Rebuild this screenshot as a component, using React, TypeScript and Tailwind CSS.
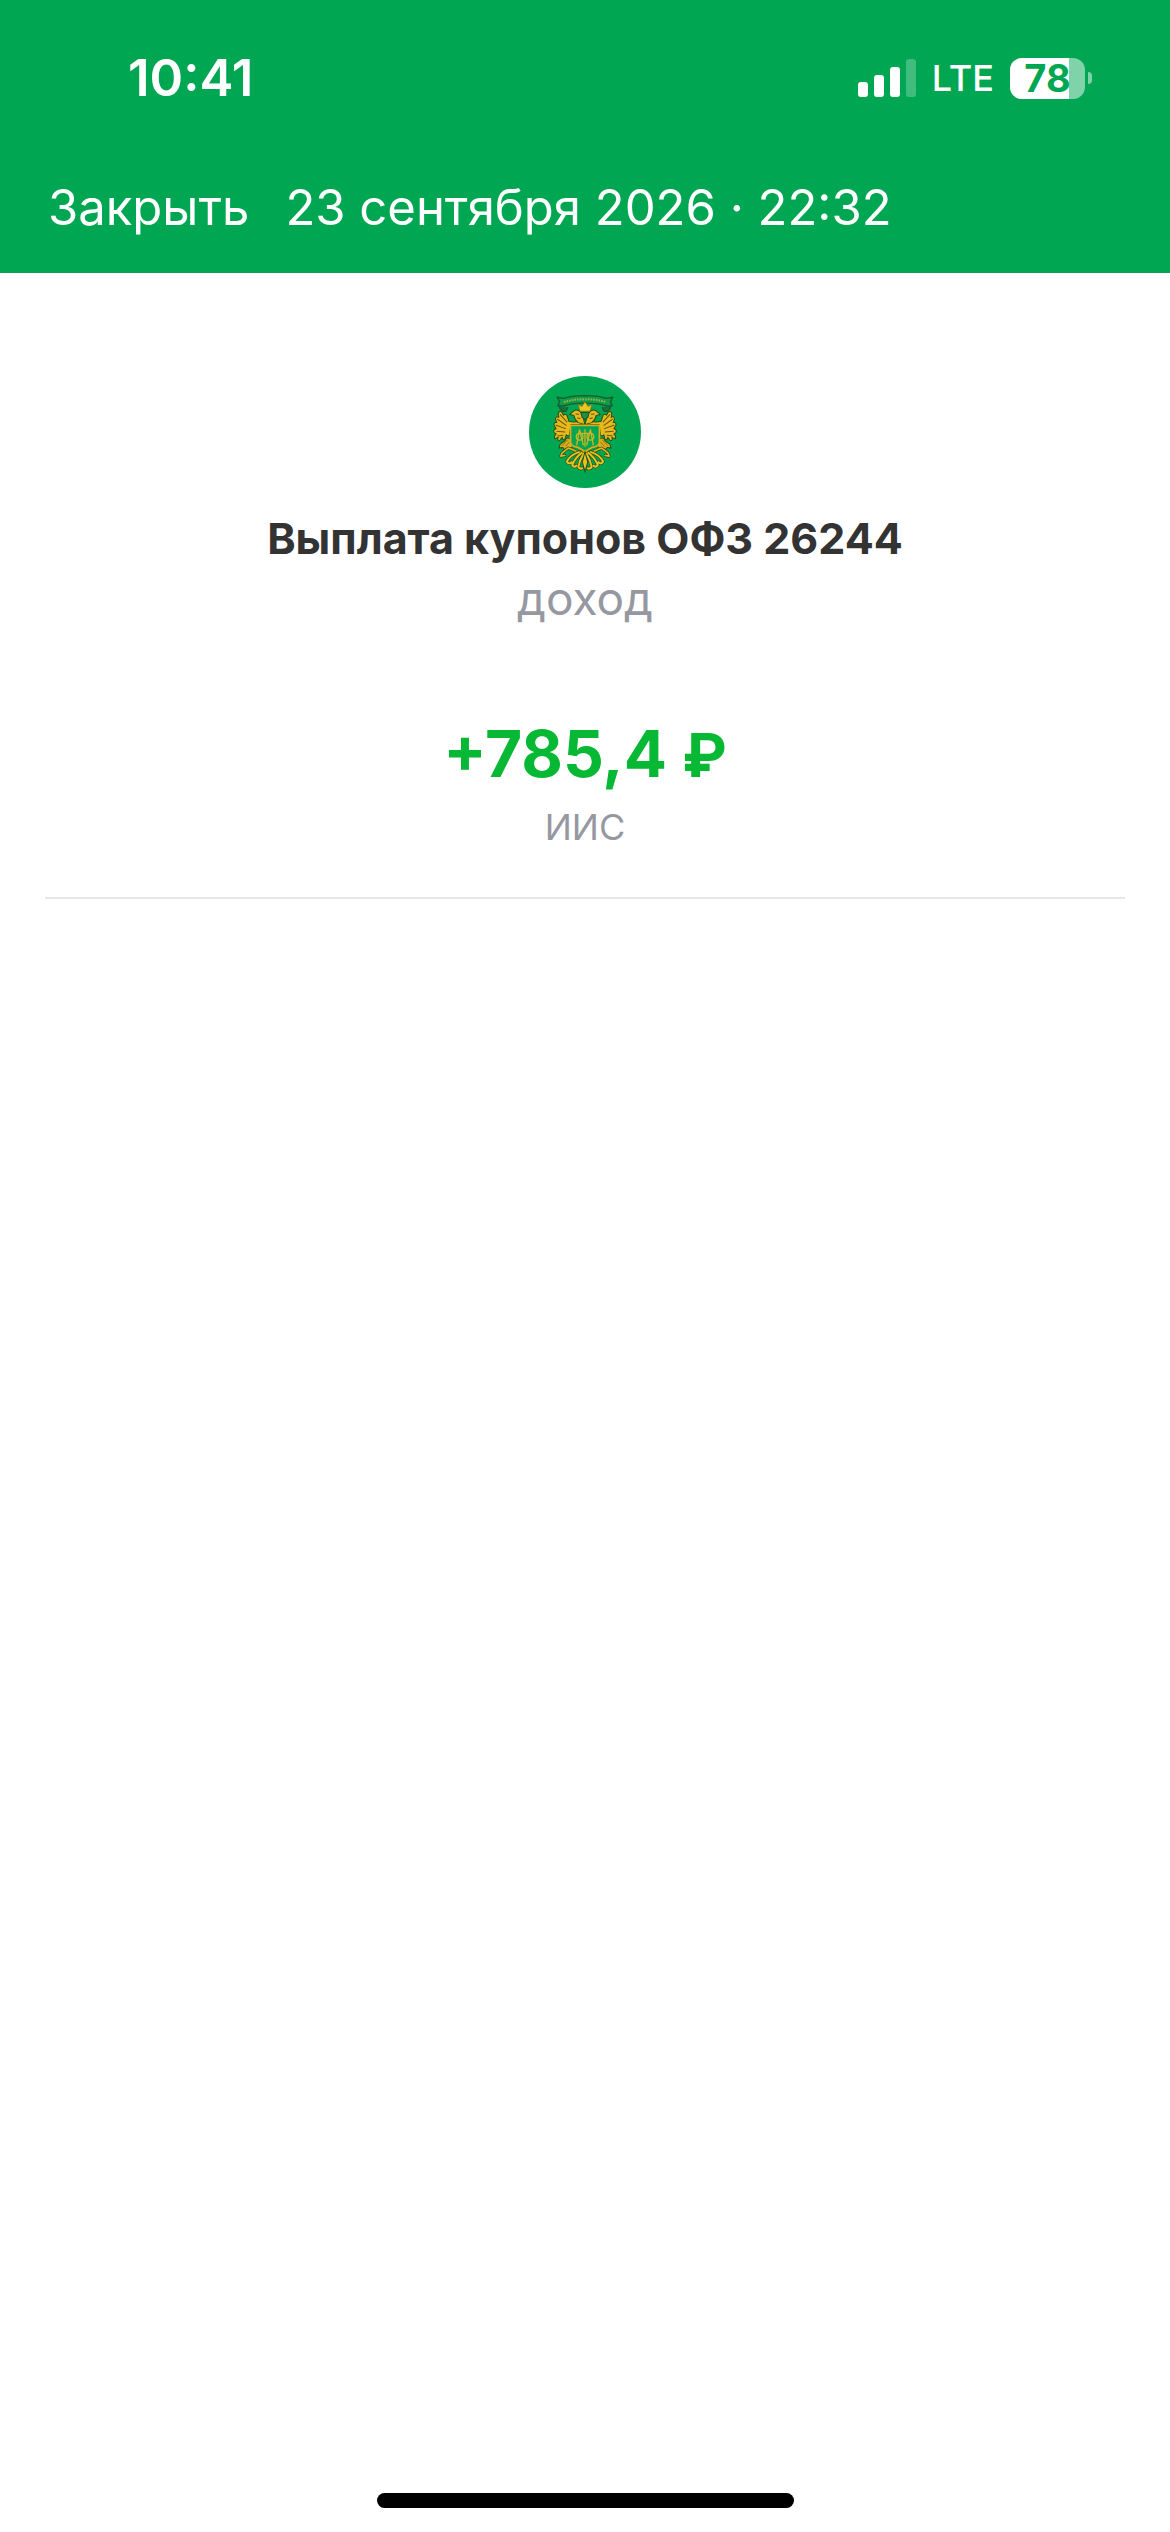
const operation = {
  date: "23 сентября 2026 · 22:32",
  title: "Выплата купонов ОФЗ 26244",
  kind: "доход",
  amount: "+785,4",
  currency: "₽",
  account: "ИИС",
};

const BATTERY_LEVEL = 78;

function SignalIcon() {
  return (
    <svg viewBox="0 0 58 38" className="h-[38px] w-[58px]" fill="#fff" aria-hidden="true">
      <rect x="0" y="23" width="10" height="15" rx="3" />
      <rect x="16" y="16" width="10" height="22" rx="3" />
      <rect x="32" y="8" width="10" height="30" rx="3" />
      <rect x="48" y="0" width="10" height="38" rx="3" opacity="0.25" />
    </svg>
  );
}

function Battery() {
  return (
    <div className="flex items-center gap-[3px]">
      <div className="relative h-[41px] w-[75px] rounded-xl bg-white/50">
        <div className="h-full rounded-l-xl bg-white" style={{ width: `${BATTERY_LEVEL}%` }} />
        <span className="absolute inset-0 flex items-center justify-center text-[38px] leading-[41px] font-bold text-[#00a651]">
          {BATTERY_LEVEL}
        </span>
      </div>
      <div className="h-3 w-1 rounded-r-full bg-white/50" />
    </div>
  );
}

// Right half of the eagle, mirrored for the left side.
function EagleHalf() {
  return (
    <g strokeLinejoin="round" strokeLinecap="round">
      <path
        d="M0 178 L14 168 Q34 172 48 168 L54 150 Q60 144 64 150 L70 140 Q78 136 80 146 L78 156 Q88 152 88 162 L84 172 Q94 170 92 180 L86 190 Q96 192 92 202 L86 206 Q94 212 90 220 L80 216 Q84 226 76 226 L68 216 Q66 226 60 222 L56 208 Q50 216 46 208 L42 178Z"
        fill="#e8b91b"
        stroke="#24501b"
        strokeWidth="3"
      />
      <path
        d="M54 170 L74 148 M56 180 L82 162 M58 190 L86 180 M60 200 L84 198 M66 210 L82 212"
        fill="none"
        stroke="#665414"
        strokeWidth="3"
      />
      <path d="M2 172 Q5 150 14 140 Q24 130 34 138 L46 148 L33 151 Q31 164 20 172 L0 178Z" fill="#e8b91b" stroke="#24501b" strokeWidth="3" />
      <path d="M19 147 L27 146 M15 160 L22 158" stroke="#604f13" strokeWidth="3" />
      <path d="M42 222 Q54 212 60 226 L74 236 L78 248 L66 246 L62 252 L52 248 L44 254 L38 244Z" fill="#dcae1c" stroke="#24501b" strokeWidth="3" />
      <path d="M46 230 L58 242 M52 224 L68 240" stroke="#604f13" strokeWidth="2" />
      <path d="M4 258 Q22 262 38 252 L50 248 L68 262 L72 272 L60 270" fill="none" stroke="#24501b" strokeWidth="9" />
      <path d="M4 258 Q22 262 38 252 L50 248 L68 262 L72 272 L60 270" fill="none" stroke="#e0b51c" strokeWidth="5" />
      <path
        d="M4 264 Q16 284 20 304 Q14 312 8 308 M10 262 Q30 278 38 298 Q32 308 26 300 M18 260 Q44 268 54 288 Q48 298 40 290"
        fill="none"
        stroke="#24501b"
        strokeWidth="10"
      />
      <path
        d="M4 264 Q16 284 20 304 Q14 312 8 308 M10 262 Q30 278 38 298 Q32 308 26 300 M18 260 Q44 268 54 288 Q48 298 40 290"
        fill="none"
        stroke="#efc11d"
        strokeWidth="6"
      />
    </g>
  );
}

function Emblem() {
  return (
    <svg viewBox="28 33 334 334" className="size-28" role="img" aria-label="Эмблема">
      <circle cx="195" cy="200" r="167" fill="#00a651" />
      <path d="M118 122 Q122 142 138 138 L144 126 M272 122 Q268 142 252 138 L246 126" fill="#16723a" stroke="#155c2e" strokeWidth="4" />
      <path
        d="M112 96 L130 100 Q160 90 195 92 Q230 90 260 100 L278 96 L271 110 L276 122 L260 122 Q230 112 195 114 Q160 112 130 122 L114 122 L119 110Z"
        fill="#129a4b"
        stroke="#155c2e"
        strokeWidth="4"
        strokeLinejoin="round"
      />
      <path d="M132 111 Q162 101 195 103 Q228 101 258 111" fill="none" stroke="#8fba46" strokeWidth="6" strokeDasharray="5 3" />
      <g transform="translate(195 0)">
        <EagleHalf />
      </g>
      <g transform="translate(195 0) scale(-1 1)">
        <EagleHalf />
      </g>
      <path d="M180 138 L175 118 L186 124 L195 110 L204 124 L215 118 L210 138Z" fill="#f2c41e" stroke="#8a7415" strokeWidth="2" />
      <path d="M183 142 L207 142 L204 156 L195 163 L186 156Z" fill="#159447" stroke="#24501b" strokeWidth="3" />
      <path d="M152 180 L238 180 L238 232 Q236 244 216 246 L195 258 L174 246 Q154 244 152 232Z" fill="#00a651" stroke="#d9ad1c" strokeWidth="5" />
      <g fill="none" stroke="#d0b423" strokeWidth="4">
        <circle cx="179" cy="214" r="10" />
        <circle cx="211" cy="214" r="10" />
        <path d="M179 192 L170 240 M211 192 L220 240 M179 194 L190 240 M211 194 L200 240 M195 192 L195 244 M184 204 L206 204" />
      </g>
      <path d="M195 258 L203 290 L195 318 L187 290Z" fill="#efc11d" stroke="#24501b" strokeWidth="3" />
    </svg>
  );
}

export default function App() {
  return (
    <div className="flex min-h-screen flex-col bg-white font-['Inter',sans-serif]">
      <header className="bg-[#00a651] text-white">
        <div className="flex h-[156px] items-center justify-between pr-[78px] pl-32">
          <time className="text-[51px] leading-[64px] font-semibold">10:41</time>
          <div className="flex items-center gap-4">
            <SignalIcon />
            <span className="text-[36px] leading-[52px] font-medium">LTE</span>
            <Battery />
          </div>
        </div>
        <div className="flex h-[117px] items-start gap-9 px-12 pt-5 text-[49px] leading-[64px]">
          <button type="button">Закрыть</button>
          <h1>{operation.date}</h1>
        </div>
      </header>

      <main className="mx-[45px] flex flex-col items-center border-b-2 border-[#e6e6e8] pt-[103px] pb-11 text-center">
        <Emblem />
        <h2 className="mt-6 text-[43px] leading-[52px] font-bold text-[#333]">{operation.title}</h2>
        <p className="mt-2 text-[46px] leading-[52px] text-[#9698a1]">{operation.kind}</p>
        <p className="mt-[88px] text-[64px] leading-[84px] font-bold text-[#06b833]">
          {operation.amount} <span className="text-[60px]">{operation.currency}</span>
        </p>
        <p className="mt-1 text-[36px] leading-[52px] text-[#9698a1]">{operation.account}</p>
      </main>

      <div className="mx-auto mt-auto mb-6 h-[15px] w-[417px] rounded-full bg-black" />
    </div>
  );
}
